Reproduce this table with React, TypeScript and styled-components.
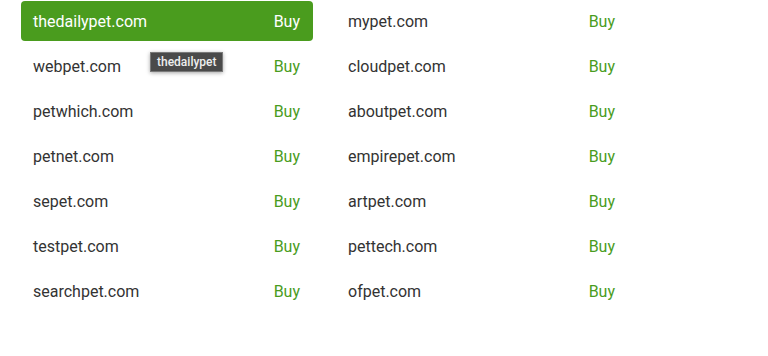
import React from 'react';
import styled, { createGlobalStyle } from 'styled-components';

const GlobalStyle = createGlobalStyle`
	body {
		margin: 0;
		background: #fff;
		font-family: Roboto, "Liberation Sans", sans-serif;
	}
`;

const left = ['thedailypet.com', 'webpet.com', 'petwhich.com', 'petnet.com', 'sepet.com', 'testpet.com', 'searchpet.com'];
const right = ['mypet.com', 'cloudpet.com', 'aboutpet.com', 'empirepet.com', 'artpet.com', 'pettech.com', 'ofpet.com'];

export default function App() {
	return (
		<>
			<GlobalStyle />
			<DomainGrid>
				{[left, right].map((col, c) => (
					<Column key={c}>
						{col.map((name, i) => {
							const active = c === 0 && i === 0;
							return (
								<DomainRow key={name} active={active}>
									<Name>{name}</Name>
									<BuyLink active={active}>Buy</BuyLink>
									{active && <Tooltip>thedailypet</Tooltip>}
								</DomainRow>
							);
						})}
					</Column>
				))}
			</DomainGrid>
		</>
	);
}

const DomainGrid = styled.div`
	display: grid;
	grid-template-columns: 292px 292px;
	column-gap: 23px;
	padding: 1px 0 0 21px;
`;

const Column = styled.div`
	display: flex;
	flex-direction: column;
	gap: 5px;
`;

const DomainRow = styled.div<{ active?: boolean }>`
	position: relative;
	height: 40px;
	display: flex;
	align-items: center;
	justify-content: space-between;
	padding: 0 13px 0 12px;
	border-radius: 4px;
	font-size: 16px;
	background: ${(p) => (p.active ? '#4a9c1e' : 'transparent')};
	color: ${(p) => (p.active ? '#fff' : '#333')};
`;

const Name = styled.span``;

const BuyLink = styled.span<{ active?: boolean }>`
	color: ${(p) => (p.active ? '#fff' : '#4a9c1e')};
`;

const Tooltip = styled.div`
	position: absolute;
	left: 129px;
	top: 51px;
	padding: 2px 6px;
	background: #4a4a4a;
	border: 1px solid #7a7a7a;
	color: #eee;
	font-size: 12px;
	font-weight: 500;
	line-height: 14px;
	box-shadow: 0 1px 4px rgba(0, 0, 0, 0.35);
	white-space: nowrap;
`;
